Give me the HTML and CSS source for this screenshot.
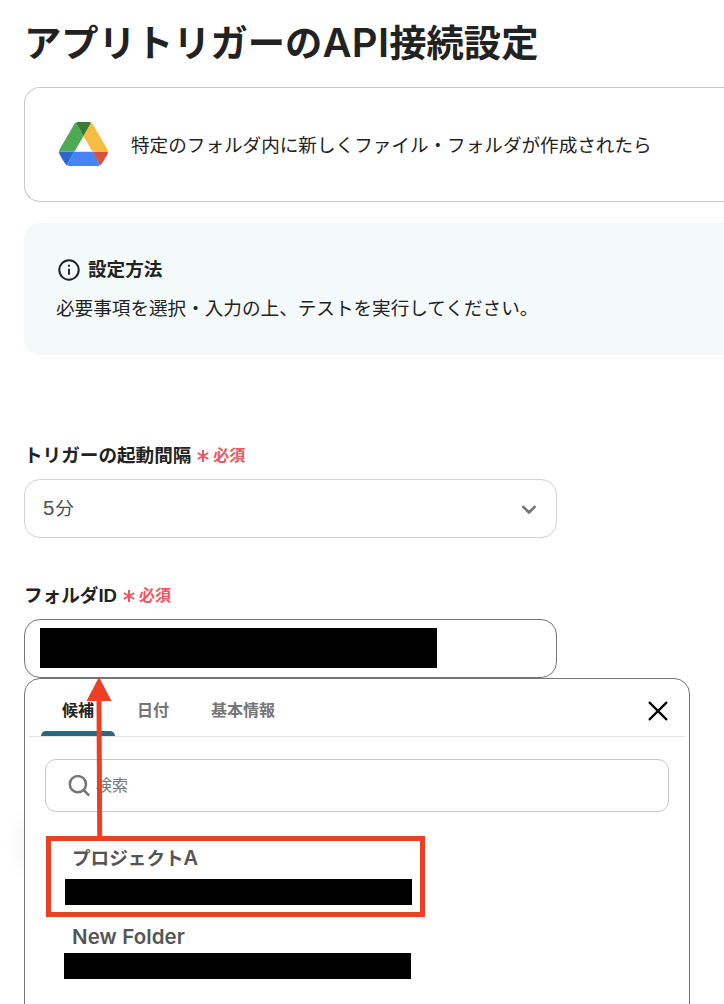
FILE: index.html
```
<!DOCTYPE html>
<html lang="ja">
<head>
    <meta charset="UTF-8">
    <meta name="viewport" content="width=device-width, initial-scale=1.0">
    <title>アプリトリガーのAPI接続設定</title>
    <link rel="stylesheet" href="styles.css">
</head>
<body>
    <h1>アプリトリガーの<span class="latin">API</span>接続設定</h1>

    <div class="app-card">
        <svg class="drive-logo" width="49" height="44" viewBox="0 0 87.3 78">
            <path fill="#2a66d4" d="m6.6 66.85 3.85 6.65c.8 1.4 1.95 2.5 3.3 3.3l13.75-23.8h-27.5c0 1.55.4 3.1 1.2 4.5z"/>
            <path fill="#4faa55" d="m43.65 25-13.75-23.8c-1.35.8-2.5 1.9-3.3 3.3l-25.4 44a9.06 9.06 0 0 0 -1.2 4.5h27.5z"/>
            <path fill="#da5140" d="m73.55 76.8c1.35-.8 2.5-1.9 3.3-3.3l1.6-2.75 7.65-13.25c.8-1.4 1.2-2.95 1.2-4.5h-27.502l5.852 11.5z"/>
            <path fill="#377d38" d="m43.65 25 13.75-23.8c-1.35-.8-2.9-1.2-4.5-1.2h-18.5c-1.6 0-3.15.45-4.5 1.2z"/>
            <path fill="#4683f5" d="m59.8 53h-32.3l-13.75 23.8c1.35.8 2.9 1.2 4.5 1.2h50.8c1.6 0 3.15-.45 4.5-1.2z"/>
            <path fill="#f5bd42" d="m73.4 26.5-12.7-22c-.8-1.4-1.95-2.5-3.3-3.3l-13.75 23.8 16.15 28h27.45c0-1.55-.4-3.1-1.2-4.5z"/>
        </svg>
        <p>特定のフォルダ内に新しくファイル・フォルダが作成されたら</p>
    </div>

    <div class="info-box">
        <h2>
            <svg width="22" height="22" viewBox="0 0 22 22" fill="none" stroke="#222" stroke-width="2">
                <circle cx="11" cy="11" r="9.7"/>
                <path d="M11 9.8v6M11 5.7v2" stroke-width="1.9"/>
            </svg>
            設定方法
        </h2>
        <p>必要事項を選択・入力の上、テストを実行してください。</p>
    </div>

    <form>
        <div class="field">
            <div class="label">トリガーの起動間隔
                <span class="required"><svg width="12" height="12" viewBox="0 0 12 12"><path d="M6 0v12M.8 3l10.4 6M.8 9l10.4-6"/></svg>必須</span>
            </div>
            <div class="control select">
                <span><span class="number">5</span>分</span>
                <svg width="16" height="10" viewBox="0 0 16 10" fill="none" stroke="#757575" stroke-width="2.6" stroke-linecap="round" stroke-linejoin="round"><path d="M2.3 1.8 8 7.5l5.7-5.7"/></svg>
            </div>
        </div>

        <div class="field">
            <div class="label">フォルダID
                <span class="required"><svg width="12" height="12" viewBox="0 0 12 12"><path d="M6 0v12M.8 3l10.4 6M.8 9l10.4-6"/></svg>必須</span>
            </div>
            <div class="control focused"><span class="mask mask-input"></span></div>
        </div>

        <div class="panel-wrap">
            <div class="shade"></div>
            <div class="panel">
                <div class="tabs">
                    <span class="tab active">候補</span>
                    <span class="tab">日付</span>
                    <span class="tab">基本情報</span>
                    <svg class="close" width="20" height="20" viewBox="0 0 20 20" fill="none" stroke="#000" stroke-width="2.2" stroke-linecap="round"><path d="M1.6 1.6 18.4 18.4M18.4 1.6 1.6 18.4"/></svg>
                </div>
                <div class="search">
                    <svg width="22" height="22" viewBox="0 0 22 22" fill="none" stroke="#757575" stroke-width="2.5" stroke-linecap="round"><circle cx="9.9" cy="9.2" r="8.1"/><path d="m15.8 15.2 4.6 4.6"/></svg>
                    <span>検索</span>
                </div>
                <div class="options">
                    <div class="option">
                        <div class="name">プロジェクト<span class="latin-small">A</span></div>
                        <span class="mask mask-option"></span>
                    </div>
                    <div class="option second">
                        <div class="name folder">New Folder</div>
                        <span class="mask mask-option"></span>
                    </div>
                </div>
            </div>

            <!-- annotation drawn over the panel -->
            <div class="highlight"></div>
            <svg class="arrow" width="26" height="160" viewBox="0 0 26 160">
                <path d="M13 20 13.7 160" stroke="#eb4025" stroke-width="5"/>
                <path d="M13 0 25.5 24H.5z" fill="#eb4025"/>
            </svg>
        </div>
    </form>
</body>
</html>
```

FILE: styles.css
```
* {
    box-sizing: border-box;
}
body {
    font-family: "Liberation Sans", "Noto Sans CJK JP", sans-serif;
    font-size: 18.6px;
    background-color: #fff;
    color: #222;
    margin: 0;
    padding: 16px 0 0 24px;
    height: 1004px;
    overflow: hidden;
}
h1 {
    margin: 0;
    height: 71px;
    font-size: 37.3px;
    line-height: 56px;
    font-weight: bold;
    white-space: nowrap;
}
.latin {
    font-family: Inter, sans-serif;
    font-size: 40px;
    font-weight: 600;
    letter-spacing: 0.3px;
    line-height: 1;
}
.latin-small {
    font-family: Inter, sans-serif;
    font-size: 20px;
    font-weight: 600;
    line-height: 1;
}
p {
    margin: 0;
    white-space: nowrap;
}
svg {
    display: block;
    flex-shrink: 0;
}
.app-card {
    display: flex;
    align-items: center;
    gap: 23px;
    height: 115px;
    padding: 0 0 2px 34px;
    border: 1px solid #c8c8c8;
    border-right: none;
    border-radius: 16px 0 0 16px;
}
.info-box {
    height: 132px;
    margin-top: 21px;
    padding: 33px 32px 0;
    background-color: #f4fafa;
    border-radius: 16px 0 0 16px;
}
.info-box h2 {
    display: flex;
    align-items: center;
    gap: 8px;
    margin: 0;
    padding-left: 2px;
    font-size: 18.6px;
    line-height: 28px;
}
.info-box p {
    margin-top: 11px;
    line-height: 28px;
}
form {
    padding-top: 86px;
}
.field {
    height: 140px;
}
.label {
    display: flex;
    align-items: center;
    gap: 6px;
    height: 38px;
    padding-bottom: 14px;
    font-weight: bold;
}
.required {
    display: flex;
    align-items: center;
    gap: 4px;
    padding-top: 2px;
    color: #ef5561;
    font-size: 16px;
}
.required svg {
    margin-top: 4px;
}
.required path {
    stroke: #ef5561;
    stroke-width: 2;
}
.control {
    display: flex;
    align-items: center;
    width: 533px;
    height: 59px;
    border: 1px solid #cfd2d6;
    border-radius: 16px;
}
.select {
    justify-content: space-between;
    padding: 0 19px 0 18px;
    color: #495057;
}
.select > span {
    padding-bottom: 4px;
}
.select svg {
    margin-top: 3px;
}
.number {
    font-size: 20.5px;
    letter-spacing: 0.9px;
}
.focused {
    padding: 0 0 1px 15px;
    border-color: #757575;
}
.mask {
    display: block;
    background-color: #000;
}
.mask-input {
    width: 397px;
    height: 40px;
}
.mask-option {
    width: 347px;
    height: 26px;
}
.panel-wrap {
    position: relative;
    width: 666px;
    margin-top: -43px;
}
.shade {
    position: absolute;
    left: 5px;
    top: 146px;
    width: 40px;
    height: 40px;
    border-radius: 20px;
    box-shadow: 0 0 30px rgba(0, 0, 0, 0.12);
}
.panel {
    position: relative;
    height: 360px;
    padding: 0 4px;
    background-color: #fff;
    border: 1px solid #757575;
    border-radius: 16px;
}
.tabs {
    display: flex;
    height: 58px;
    padding-left: 12px;
    border-bottom: 1px solid #e2e2e2;
    color: #757575;
    font-size: 16px;
    font-weight: bold;
}
.tab {
    height: 57px;
    padding: 0 21px;
    line-height: 63px;
}
.tab.active {
    position: relative;
    margin-right: 1px;
    color: #222;
}
.tab.active::after {
    content: "";
    position: absolute;
    left: 0;
    right: 0;
    bottom: 0;
    height: 5px;
    background-color: #2f667f;
    border-radius: 5px 5px 0 0;
}
.close {
    margin: 22px 17px 0 auto;
}
.search {
    display: flex;
    align-items: center;
    gap: 6px;
    width: 624px;
    height: 53px;
    margin: 22px 0 0 16px;
    padding-left: 22px;
    border: 1px solid #c8c8c8;
    border-radius: 11px;
    color: #757575;
    font-size: 16px;
}
.search span {
    padding-bottom: 4px;
}
.options {
    padding: 32px 0 0 36px;
}
.option {
    height: 75px;
}
.name {
    height: 35px;
    padding-left: 7px;
    color: #555;
    font-weight: bold;
    line-height: 29px;
}
.second {
    margin: -1px 0 0 -1px;
}
.folder {
    padding-left: 8px;
    font-family: Inter, sans-serif;
    font-size: 20.5px;
    font-weight: 600;
    letter-spacing: 0.1px;
    line-height: 37px;
}
.highlight {
    position: absolute;
    left: 22px;
    top: 158px;
    width: 379px;
    height: 81px;
    border: 5px solid #eb4025;
}
.arrow {
    position: absolute;
    left: 62px;
    top: -1px;
}
```
